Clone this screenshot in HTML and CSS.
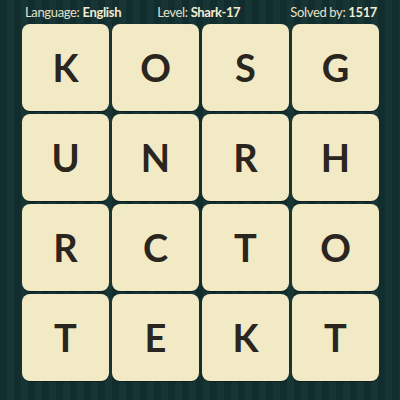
FILE: index.html
```html
<!DOCTYPE html>
<html>
<head>
<meta charset="utf-8">
<link rel="stylesheet" href="styles.css">
</head>
<body>
<div class="page">
  <div class="header">
    <span class="item">Language: <b>English</b></span>
    <span class="item">Level: <b>Shark-17</b></span>
    <span class="item">Solved by: <b>1517</b></span>
  </div>
  <div class="board">
    <div class="tile">K</div><div class="tile">O</div><div class="tile">S</div><div class="tile">G</div>
    <div class="tile">U</div><div class="tile">N</div><div class="tile">R</div><div class="tile">H</div>
    <div class="tile">R</div><div class="tile">C</div><div class="tile">T</div><div class="tile">O</div>
    <div class="tile">T</div><div class="tile">E</div><div class="tile">K</div><div class="tile">T</div>
  </div>
</div>
</body>
</html>
```

FILE: styles.css
```css
html, body {
  margin: 0;
  padding: 0;
}
body {
  width: 400px;
  height: 400px;
  overflow: hidden;
  background: repeating-linear-gradient(90deg, #122d2e 0px, #122d2e 7px, #173535 7px, #173535 14px);
  font-family: Lato, "Open Sans", sans-serif;
}
.page {
  width: 400px;
  height: 400px;
}
.header {
  height: 24px;
  display: flex;
  align-items: center;
  padding: 0 0 0 25px;
  color: #e6e1c6;
  font-size: 13px;
  letter-spacing: -0.35px;
  box-sizing: border-box;
}
.header .item:nth-child(2) {
  margin-left: 36px;
}
.header .item:nth-child(3) {
  margin-left: 50px;
}
.header b {
  font-weight: 700;
  color: #f1ecd2;
}
.board {
  display: grid;
  grid-template-columns: repeat(4, 87px);
  grid-template-rows: repeat(4, 87px);
  gap: 3px;
  margin-left: 22px;
}
.tile {
  background: #f1eac4;
  border-radius: 8px;
  box-shadow: 0 1px 0 rgba(0, 0, 0, 0.35);
  display: flex;
  align-items: center;
  justify-content: center;
  font-size: 38px;
  font-weight: 700;
  color: #2a251f;
  padding-bottom: 1px;
  box-sizing: border-box;
}
```
